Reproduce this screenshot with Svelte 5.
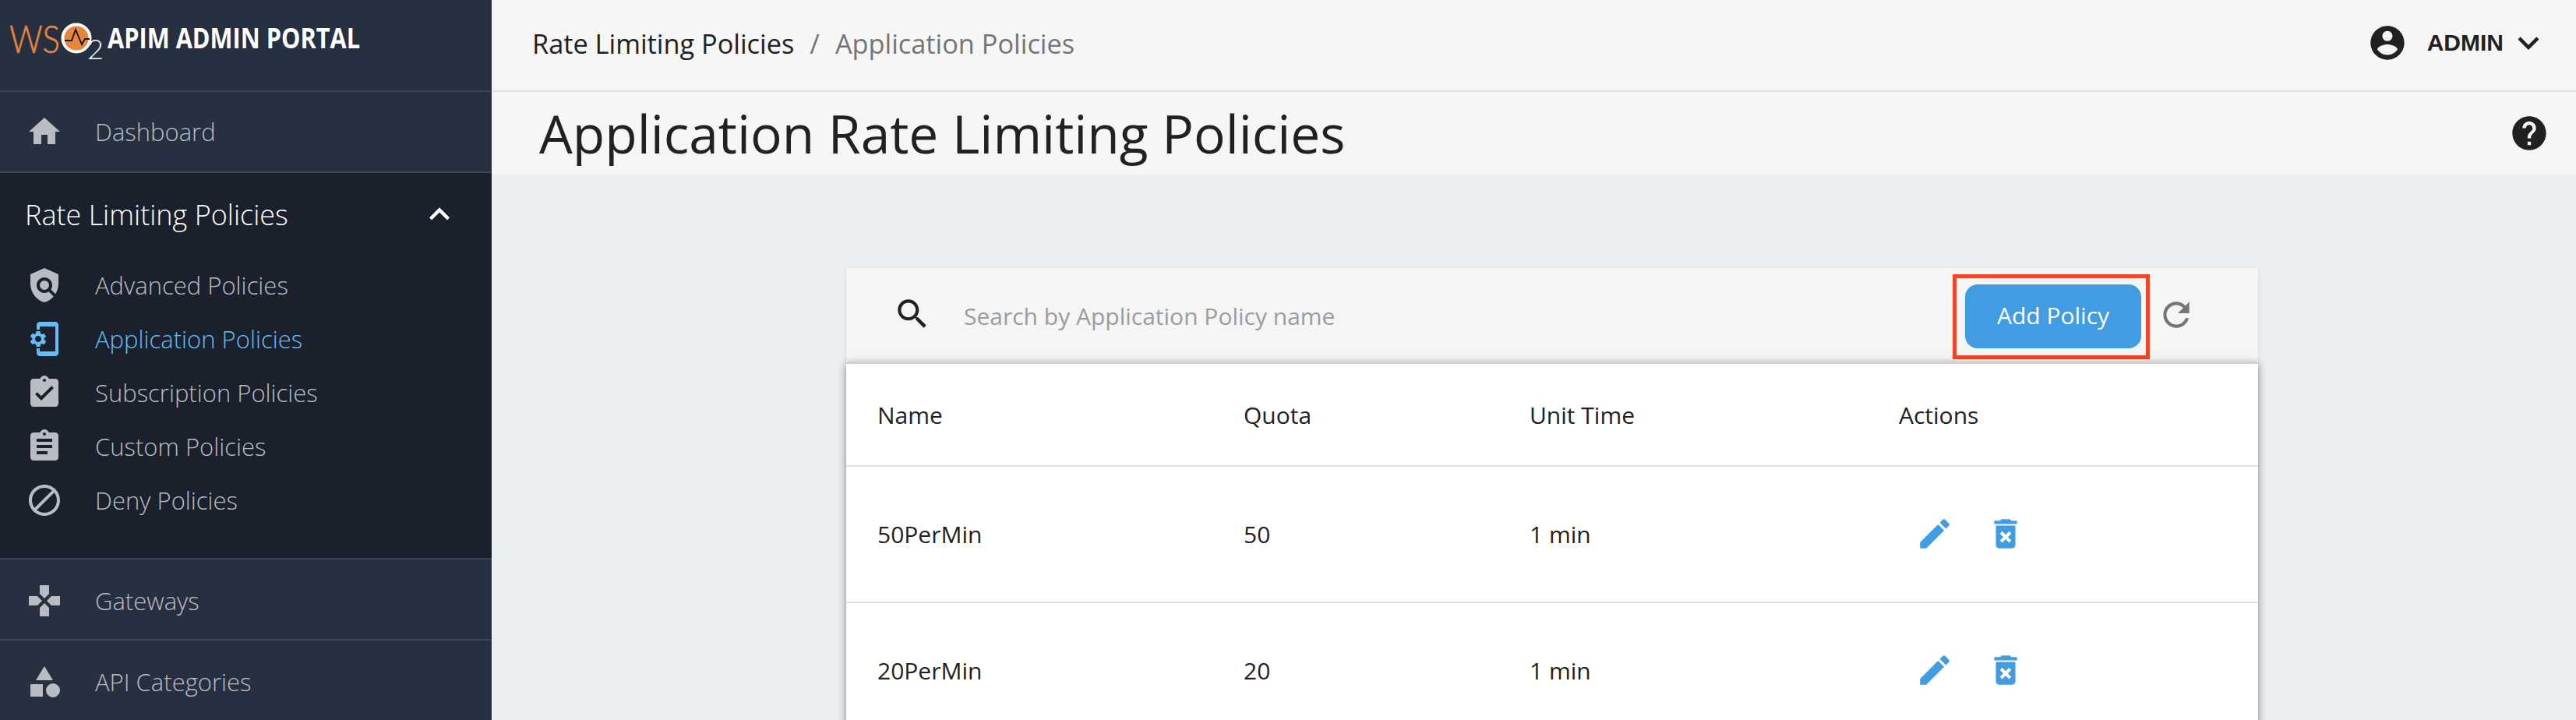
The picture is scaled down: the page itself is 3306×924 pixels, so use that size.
<script>
  const icons = {
    home: 'M10 20v-6h4v6h5v-8h3L12 3 2 12h3v8z',
    policy: 'M12,1L3,5v6c0,5.55,3.84,10.74,9,12c2.3-0.56,4.33-1.9,5.88-3.71l-3.12-3.12c-1.94,1.29-4.58,1.07-6.29-0.64c-1.95-1.95-1.95-5.12,0-7.07c1.95-1.95,5.12-1.95,7.07,0c1.71,1.71,1.92,4.35,0.64,6.29l2.9,2.9C20.29,15.69,21,13.38,21,11V5L12,1z M12 9a3 3 0 1 0 0 6a3 3 0 1 0 0-6z',
    phone: 'M11.8 12.5v-1l1.1-.8c.1-.1.1-.2.1-.3l-1-1.7c-.1-.1-.2-.2-.3-.1l-1.3.4c-.3-.2-.6-.4-.9-.5l-.2-1.3c0-.1-.1-.2-.3-.2H7c-.1 0-.2.1-.3.2l-.2 1.3c-.3.1-.6.3-.9.5l-1.3-.5c-.1 0-.2 0-.3.1l-1 1.7c-.1.1 0 .2.1.3l1.1.8v1l-1.1.8c-.1.2-.1.3-.1.4l1 1.7c.1.1.2.2.3.1l1.4-.4c.3.2.6.4.9.5l.2 1.3c-.1.1.1.2.2.2h2c.1 0 .2-.1.3-.2l.2-1.3c.3-.1.6-.3.9-.5l1.3.5c.1 0 .2 0 .3-.1l1-1.7c.1-.1 0-.2-.1-.3l-1.1-.9zM8 14c-1.1 0-2-.9-2-2s.9-2 2-2 2 .9 2 2-.9 2-2 2zM19 1H9c-1.1 0-2 .9-2 2v3h2V4h10v16H9v-2H7v3c0 1.1.9 2 2 2h10c1.1 0 2-.9 2-2V3c0-1.1-.9-2-2-2z',
    check: 'M19 3h-4.18C14.4 1.84 13.3 1 12 1c-1.3 0-2.4.84-2.82 2H5c-1.1 0-2 .9-2 2v14c0 1.1.9 2 2 2h14c1.1 0 2-.9 2-2V5c0-1.1-.9-2-2-2zm-7 0c.55 0 1 .45 1 1s-.45 1-1 1-1-.45-1-1 .45-1 1-1zm-2 14l-4-4 1.41-1.41L10 14.17l6.59-6.59L18 9l-8 8z',
    assign: 'M19 3h-4.18C14.4 1.84 13.3 1 12 1c-1.3 0-2.4.84-2.82 2H5c-1.1 0-2 .9-2 2v14c0 1.1.9 2 2 2h14c1.1 0 2-.9 2-2V5c0-1.1-.9-2-2-2zm-7 0c.55 0 1 .45 1 1s-.45 1-1 1-1-.45-1-1 .45-1 1-1zm2 14H7v-2h7v2zm3-4H7v-2h10v2zm0-4H7V7h10v2z',
    block: 'M12 2C6.48 2 2 6.48 2 12s4.48 10 10 10 10-4.48 10-10S17.52 2 12 2zM4 12c0-4.42 3.58-8 8-8 1.85 0 3.55.63 4.9 1.69L5.69 16.9C4.63 15.55 4 13.85 4 12zm8 8c-1.85 0-3.55-.63-4.9-1.69L18.31 7.1C19.37 8.45 20 10.15 20 12c0 4.42-3.58 8-8 8z',
    gamepad: 'M15 7.5V2H9v5.5l3 3 3-3zM7.5 9H2v6h5.5l3-3-3-3zM9 16.5V22h6v-5.5l-3-3-3 3zM16.5 9l-3 3 3 3H22V9h-5.5z',
    category: 'M12 2l-5.5 9h11zM17.5 13a4.5 4.5 0 1 0 0 9a4.5 4.5 0 1 0 0-9zM3 13.5h8v8H3z',
    account: 'M12 2C6.48 2 2 6.48 2 12s4.48 10 10 10 10-4.48 10-10S17.52 2 12 2zm0 3c1.66 0 3 1.34 3 3s-1.34 3-3 3-3-1.34-3-3 1.34-3 3-3zm0 14.2c-2.5 0-4.71-1.28-6-3.22.03-1.99 4-3.08 6-3.08 1.99 0 5.97 1.09 6 3.08-1.29 1.94-3.5 3.22-6 3.22z',
    help: 'M12 2C6.48 2 2 6.48 2 12s4.48 10 10 10 10-4.48 10-10S17.52 2 12 2zm1 17h-2v-2h2v2zm2.07-7.75l-.9.92C13.45 12.9 13 13.5 13 15h-2v-.5c0-1.1.45-2.1 1.17-2.83l1.24-1.26c.37-.36.59-.86.59-1.41 0-1.1-.9-2-2-2s-2 .9-2 2H8c0-2.21 1.79-4 4-4s4 1.79 4 4c0 .88-.36 1.68-.93 2.25z',
    search: 'M15.5 14h-.79l-.28-.27C15.41 12.59 16 11.11 16 9.5 16 5.91 13.09 3 9.5 3S3 5.91 3 9.5 5.91 16 9.5 16c1.61 0 3.09-.59 4.23-1.57l.27.28v.79l5 4.99L20.49 19l-4.99-5zm-6 0C7.01 14 5 11.99 5 9.5S7.01 5 9.5 5 14 7.01 14 9.5 11.99 14 9.5 14z',
    refresh: 'M17.65 6.35C16.2 4.9 14.21 4 12 4c-4.42 0-7.99 3.58-7.99 8s3.57 8 7.99 8c3.73 0 6.84-2.55 7.73-6h-2.08c-.82 2.33-3.04 4-5.65 4-3.31 0-6-2.69-6-6s2.69-6 6-6c1.66 0 3.14.69 4.22 1.78L13 11h7V4l-2.35 2.35z',
    edit: 'M3 17.25V21h3.75L17.81 9.94l-3.75-3.75L3 17.25zM20.71 7.04c.39-.39.39-1.02 0-1.41l-2.34-2.34c-.39-.39-1.02-.39-1.41 0l-1.83 1.83 3.75 3.75 1.83-1.83z',
    del: 'M6 19c0 1.1.9 2 2 2h8c1.1 0 2-.9 2-2V7H6v12zm2.46-7.12l1.41-1.41L12 12.59l2.12-2.12 1.41 1.41L13.41 14l2.12 2.12-1.41 1.41L12 15.41l-2.12 2.12-1.41-1.41L10.59 14l-2.13-2.12zM15.5 4l-1-1h-5l-1 1H5v2h14V4z',
    less: 'M12 8l-6 6 1.41 1.41L12 10.83l4.59 4.58L18 14z',
    more: 'M16.59 8.59L12 13.17 7.41 8.59 6 10l6 6 6-6z'
  };
  const subItems = [
    { label: 'Advanced Policies', icon: 'policy' },
    { label: 'Application Policies', icon: 'phone', active: true },
    { label: 'Subscription Policies', icon: 'check' },
    { label: 'Custom Policies', icon: 'assign' },
    { label: 'Deny Policies', icon: 'block' }
  ];
  const rows = [
    { name: '50PerMin', quota: '50', unit: '1 min' },
    { name: '20PerMin', quota: '20', unit: '1 min' }
  ];
</script>

{#snippet icon(name, cls)}
  <svg class={cls} viewBox="0 0 24 24" aria-hidden="true"><path d={icons[name]} /></svg>
{/snippet}

<div class="page">
  <aside class="sidebar">
    <div class="brand">
      <svg class="logo" viewBox="0 0 124 50" aria-label="WSO2">
        <text x="0" y="39" class="logo-ws" textLength="65" lengthAdjust="spacingAndGlyphs">WS</text>
        <circle cx="86" cy="20" r="17.5" fill="#e8853a" stroke="#fff" stroke-width="4" />
        <path d="M71 23h9l5-14 8 19 4-7h6" fill="none" stroke="#111" stroke-width="1.8" />
        <text x="100" y="47" class="logo-two">2</text>
      </svg>
      <span class="brand-title">APIM ADMIN PORTAL</span>
    </div>
    <div class="nav-row">
      {@render icon('home', 'nav-icon')}
      <span>Dashboard</span>
    </div>
    <div class="group">
      <div class="group-head">
        <span>Rate Limiting Policies</span>
        {@render icon('less', 'group-chevron')}
      </div>
      <ul class="sub-list">
        {#each subItems as item}
          <li class="sub-item" class:active={item.active}>
            {@render icon(item.icon, 'nav-icon')}
            <span>{item.label}</span>
          </li>
        {/each}
      </ul>
    </div>
    <div class="nav-row low">
      {@render icon('gamepad', 'nav-icon')}
      <span>Gateways</span>
    </div>
    <div class="nav-row low">
      {@render icon('category', 'nav-icon')}
      <span>API Categories</span>
    </div>
  </aside>

  <main class="main">
    <header class="topbar">
      <nav class="crumbs">
        <span class="crumb-link">Rate Limiting Policies</span>
        <span class="crumb-sep">/</span>
        <span class="crumb-current">Application Policies</span>
      </nav>
      <div class="user">
        {@render icon('account', 'user-icon')}
        <span class="user-name">ADMIN</span>
        {@render icon('more', 'user-chevron')}
      </div>
    </header>
    <div class="titlebar">
      <h1>Application Rate Limiting Policies</h1>
      {@render icon('help', 'help-icon')}
    </div>
    <section class="content">
      <div class="card">
        <div class="toolbar">
          {@render icon('search', 'search-icon')}
          <input class="search" type="text" placeholder="Search by Application Policy name" />
          <div class="highlight">
            <button class="add" type="button">Add Policy</button>
          </div>
          {@render icon('refresh', 'refresh-icon')}
        </div>
        <div class="table">
          <div class="tr head">
            <div>Name</div>
            <div>Quota</div>
            <div>Unit Time</div>
            <div>Actions</div>
          </div>
          {#each rows as row}
            <div class="tr">
              <div>{row.name}</div>
              <div>{row.quota}</div>
              <div>{row.unit}</div>
              <div class="actions">
                {@render icon('edit', 'action-icon')}
                {@render icon('del', 'action-icon')}
              </div>
            </div>
          {/each}
        </div>
      </div>
    </section>
  </main>
</div>

<style>
  :global(body) {
    margin: 0;
    background: #ebeff2;
  }
  .page {
    display: flex;
    width: 3306px;
    height: 924px;
    overflow: hidden;
    font-family: "Open Sans", "Liberation Sans", sans-serif;
    color: #212121;
  }
  svg {
    fill: currentColor;
    flex: none;
    display: block;
  }

  /* sidebar */
  .sidebar {
    width: 631px;
    flex: none;
    display: flex;
    flex-direction: column;
    background: #263040;
    color: #b9bcc2;
    border-right: 1px solid #f0f2f4;
    font-size: 31px;
    font-weight: 300;
  }
  .brand {
    height: 118px;
    flex: none;
    box-sizing: border-box;
    padding: 24px 0 0 12px;
    display: flex;
    align-items: flex-start;
    border-bottom: 2px solid #3d4552;
  }
  .logo {
    width: 124px;
    height: 50px;
    margin-top: 5px;
    overflow: visible;
  }
  .logo-ws {
    font-family: "Lato", sans-serif;
    font-weight: 300;
    font-size: 50px;
    fill: #e8853a;
    stroke: #e8853a;
    stroke-width: 0.6px;
  }
  .logo-two {
    font-family: "Lato", sans-serif;
    font-weight: 300;
    font-size: 36px;
    fill: #fff;
  }
  .brand-title {
    margin-left: 2px;
    color: #fff;
    font-weight: 700;
    font-size: 35px;
    line-height: 50px;
    white-space: nowrap;
    transform: scaleX(0.878);
    transform-origin: left center;
  }
  .nav-row {
    height: 102px;
    flex: none;
    display: flex;
    align-items: center;
    gap: 41px;
    padding-left: 33px;
    border-bottom: 2px solid #3d4552;
  }
  .nav-row.low {
    height: 98px;
    padding-top: 4px;
  }
  .nav-icon {
    width: 48px;
    height: 48px;
  }
  .group {
    flex: none;
    height: 496px;
    box-sizing: border-box;
    background: #1a202c;
    border-bottom: 2px solid #3d4552;
    padding-top: 21px;
  }
  .group-head {
    height: 64px;
    display: flex;
    align-items: center;
    justify-content: space-between;
    padding: 0 32px;
    color: #fff;
    font-size: 36px;
  }
  .group-chevron {
    width: 52px;
    height: 52px;
    margin-right: 9px;
  }
  .sub-list {
    list-style: none;
    margin: 0;
    padding: 24px 0 0 33px;
  }
  .sub-item {
    height: 69px;
    display: flex;
    align-items: center;
    gap: 41px;
  }
  .sub-item.active {
    color: #64bdf5;
  }

  /* main */
  .main {
    flex: 1;
    min-width: 0;
    display: flex;
    flex-direction: column;
  }
  .topbar {
    height: 118px;
    box-sizing: border-box;
    flex: none;
    background: #f6f6f6;
    border-bottom: 2px solid #e0e0e0;
    display: flex;
    align-items: center;
    justify-content: space-between;
    padding: 0 34px 6px 51px;
  }
  .crumbs {
    display: flex;
    align-items: center;
    gap: 20px;
    font-size: 34.3px;
  }
  .crumb-sep,
  .crumb-current {
    color: #757575;
  }
  .user {
    display: flex;
    align-items: center;
  }
  .user-icon {
    width: 52px;
    height: 52px;
  }
  .user-name {
    font-family: "Liberation Sans", Arial, sans-serif;
    font-weight: 700;
    font-size: 30px;
    margin: 0 5px 0 25px;
  }
  .user-chevron {
    width: 54px;
    height: 54px;
  }
  .titlebar {
    height: 106px;
    flex: none;
    background: #f6f6f6;
    display: flex;
    align-items: center;
    justify-content: space-between;
    padding: 0 34px 0 60px;
  }
  h1 {
    margin: 0;
    font-size: 67.7px;
    font-weight: 400;
    color: #212121;
  }
  .help-icon {
    width: 52px;
    height: 52px;
  }
  .content {
    flex: 1;
    padding: 120px 0 0 454px;
    background: #ebeff2;
    min-height: 0;
  }
  .card {
    width: 1812px;
    font-size: 30px;
  }
  .toolbar {
    height: 121px;
    box-sizing: border-box;
    background: #f5f5f5;
    display: flex;
    align-items: center;
    padding: 3px 80px 0 60px;
    box-shadow: 0 1px 4px rgba(0, 0, 0, 0.12);
  }
  .search-icon {
    width: 50px;
    height: 50px;
    margin-top: -6px;
    color: #212121;
  }
  .search {
    flex: 1;
    min-width: 0;
    margin: -2px 0 0 41px;
    border: 0;
    outline: 0;
    padding: 0;
    background: transparent;
    font: inherit;
    color: #212121;
  }
  .search::placeholder {
    color: #9c9c9c;
    opacity: 1;
  }
  .highlight {
    border: 5px solid #f04527;
    padding: 8px 6px 9px 11px;
  }
  .add {
    display: block;
    width: 226px;
    height: 82px;
    border: 0;
    border-radius: 16px;
    background: #419ce2;
    color: #fff;
    font: inherit;
    padding: 0 0 3px;
  }
  .refresh-icon {
    width: 50px;
    height: 50px;
    margin: -4px 0 0 9px;
    color: #757575;
  }
  .table {
    position: relative;
    background: #fff;
    border-top: 2px solid #cfcfcf;
    box-shadow: 0 2px 10px rgba(0, 0, 0, 0.45);
  }
  .tr {
    display: grid;
    grid-template-columns: 510px 367px 474px 1fr;
    align-items: center;
    height: 173px;
    border-bottom: 2px solid #e0e0e0;
  }
  .tr > div:first-child {
    padding-left: 40px;
  }
  .tr.head {
    height: 130px;
  }
  .actions {
    display: flex;
    align-items: center;
    gap: 41px;
    padding-left: 21px;
    color: #419ce2;
  }
  .action-icon {
    width: 50px;
    height: 50px;
    margin-top: -2px;
  }
</style>
